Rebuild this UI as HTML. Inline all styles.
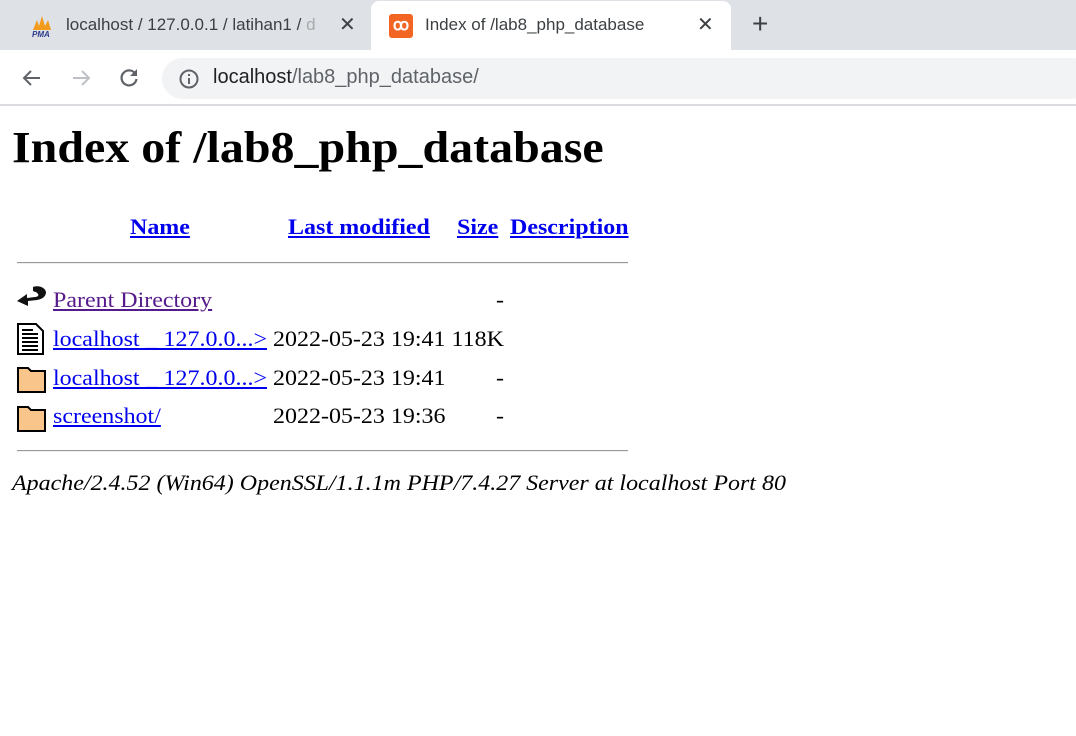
<!DOCTYPE html>
<html><head><meta charset="utf-8"><style>
*{margin:0;padding:0;box-sizing:border-box}
body{width:1076px;height:736px;overflow:hidden;background:#fff;position:relative;font-family:"Liberation Serif",serif}
.a{position:absolute;white-space:nowrap}
.ui{font-family:"Liberation Sans",sans-serif}
a{color:#0000ee;text-decoration:underline}
.t{font-size:22px;line-height:24px;transform:scaleX(1.09);transform-origin:0 0}
</style></head><body>
<div class="a" style="left:0;top:0;width:1076px;height:50px;background:#dee1e6"></div>
<div class="a" style="left:371px;top:1px;width:360px;height:50px;background:#fff;border-radius:8px 8px 0 0"></div>
<svg class="a" style="left:30px;top:14px" width="24" height="24" viewBox="0 0 24 24"><path d="M3 16 L7 6 L9 12 L12 2 L15 12 L18 6 L21 16Z" fill="#f29b1d"/><text x="2" y="23" font-size="8" font-weight="bold" font-style="italic" fill="#2a3a8a" font-family="Liberation Sans">PMA</text></svg>
<div class="a ui" style="left:66px;top:15px;font-size:17px;color:#3c4043;width:265px;overflow:hidden">localhost / 127.0.0.1 / latihan1 / <span style="color:#aaa">d</span></div>
<div class="a ui" style="left:339px;top:12px;font-size:20px;color:#3c4043">✕</div>
<div class="a" style="left:389px;top:14px;width:24px;height:24px;background:#f26522;border-radius:3px;color:#fff;font:bold 16px 'Liberation Sans';text-align:center;line-height:24px">ꝏ</div>
<div class="a ui" style="left:425px;top:15px;font-size:17px;color:#3c4043">Index of /lab8_php_database</div>
<div class="a ui" style="left:697px;top:12px;font-size:20px;color:#3c4043">✕</div>
<div class="a ui" style="left:752px;top:8px;font-size:28px;color:#3c4043">+</div>
<svg class="a" style="left:20px;top:66px" width="24" height="24" viewBox="0 0 24 24"><path d="M20 12H5M11 5l-7 7 7 7" stroke="#5f6368" stroke-width="2" fill="none"/></svg>
<svg class="a" style="left:69px;top:66px" width="24" height="24" viewBox="0 0 24 24"><path d="M4 12h15M13 5l7 7-7 7" stroke="#bdc1c6" stroke-width="2" fill="none"/></svg>
<svg class="a" style="left:117px;top:66px" width="24" height="24" viewBox="0 0 24 24"><path d="M18.5 8A7.5 7.5 0 1 0 19.5 13" stroke="#5f6368" stroke-width="2.2" fill="none"/><path d="M20 3v7h-7z" fill="#5f6368"/></svg>
<div class="a" style="left:162px;top:58px;width:930px;height:41px;background:#f1f3f4;border-radius:21px"></div>
<svg class="a" style="left:177px;top:67px" width="24" height="24" viewBox="0 0 24 24"><circle cx="12" cy="12" r="8.5" stroke="#5f6368" stroke-width="2" fill="none"/><path d="M12 11v6M12 7v2" stroke="#5f6368" stroke-width="2"/></svg>
<div class="a ui" style="left:213px;top:66px;font-size:20px;color:#202124">localhost<span style="color:#5f6368">/lab8_php_database/</span></div>
<div class="a" style="left:0;top:104px;width:1076px;height:2px;background:#dadce0"></div>
<div class="a" style="left:12px;top:122px;font-size:44px;font-weight:bold;line-height:52px;transform:scaleX(1.09);transform-origin:0 0">Index of /lab8_php_database</div>
<div class="a t" style="left:130px;top:215px;font-weight:bold"><a href="#">Name</a></div>
<div class="a t" style="left:288px;top:215px;font-weight:bold"><a href="#">Last modified</a></div>
<div class="a t" style="left:457px;top:215px;font-weight:bold"><a href="#">Size</a></div>
<div class="a t" style="left:510px;top:215px;font-weight:bold"><a href="#">Description</a></div>
<div class="a" style="left:17px;top:262px;width:611px;height:2px;border-top:1px solid #9a9a9a;border-bottom:1px solid #eee"></div>
<div class="a" style="left:17px;top:450px;width:611px;height:2px;border-top:1px solid #9a9a9a;border-bottom:1px solid #eee"></div>
<svg class="a" style="left:16px;top:284px" width="32" height="30" viewBox="0 0 32 30"><path d="M17 3c5-2 12 0 13 5 0 4-3 7-9 8l-9 1v5L1 17l10-7v4l8-1c3 0 4-2 3-3-1-2-3-2-5-3z" fill="#111"/></svg>
<svg class="a" style="left:17px;top:323px" width="28" height="32" viewBox="0 0 28 32"><path d="M1 1h18l7 7v23H1z" fill="#fff" stroke="#000" stroke-width="2"/><path d="M5 7h11M5 11h16M5 15h16M5 19h16M5 23h16M5 27h16" stroke="#000" stroke-width="2"/></svg>
<svg class="a" style="left:16px;top:364px" width="32" height="30" viewBox="0 0 32 30"><path d="M2 4h10l3 3h14v21H2z" fill="#f9c58a" stroke="#000" stroke-width="2"/></svg>
<svg class="a" style="left:16px;top:403px" width="32" height="30" viewBox="0 0 32 30"><path d="M2 4h10l3 3h14v21H2z" fill="#f9c58a" stroke="#000" stroke-width="2"/></svg>
<div class="a t" style="left:53px;top:288px"><a href="#" style="color:#551a8b">Parent Directory</a></div>
<div class="a t" style="left:496px;top:288px">-</div>
<div class="a t" style="left:53px;top:327px"><a href="#">localhost _ 127.0.0...&gt;</a></div>
<div class="a t" style="left:273px;top:327px">2022-05-23 19:41 118K</div>
<div class="a t" style="left:53px;top:366px"><a href="#">localhost _ 127.0.0...&gt;</a></div>
<div class="a t" style="left:273px;top:366px">2022-05-23 19:41</div>
<div class="a t" style="left:496px;top:366px">-</div>
<div class="a t" style="left:53px;top:404px"><a href="#">screenshot/</a></div>
<div class="a t" style="left:273px;top:404px">2022-05-23 19:36</div>
<div class="a t" style="left:496px;top:404px">-</div>
<div class="a t" style="left:12px;top:471px;font-style:italic">Apache/2.4.52 (Win64) OpenSSL/1.1.1m PHP/7.4.27 Server at localhost Port 80</div>
</body></html>
